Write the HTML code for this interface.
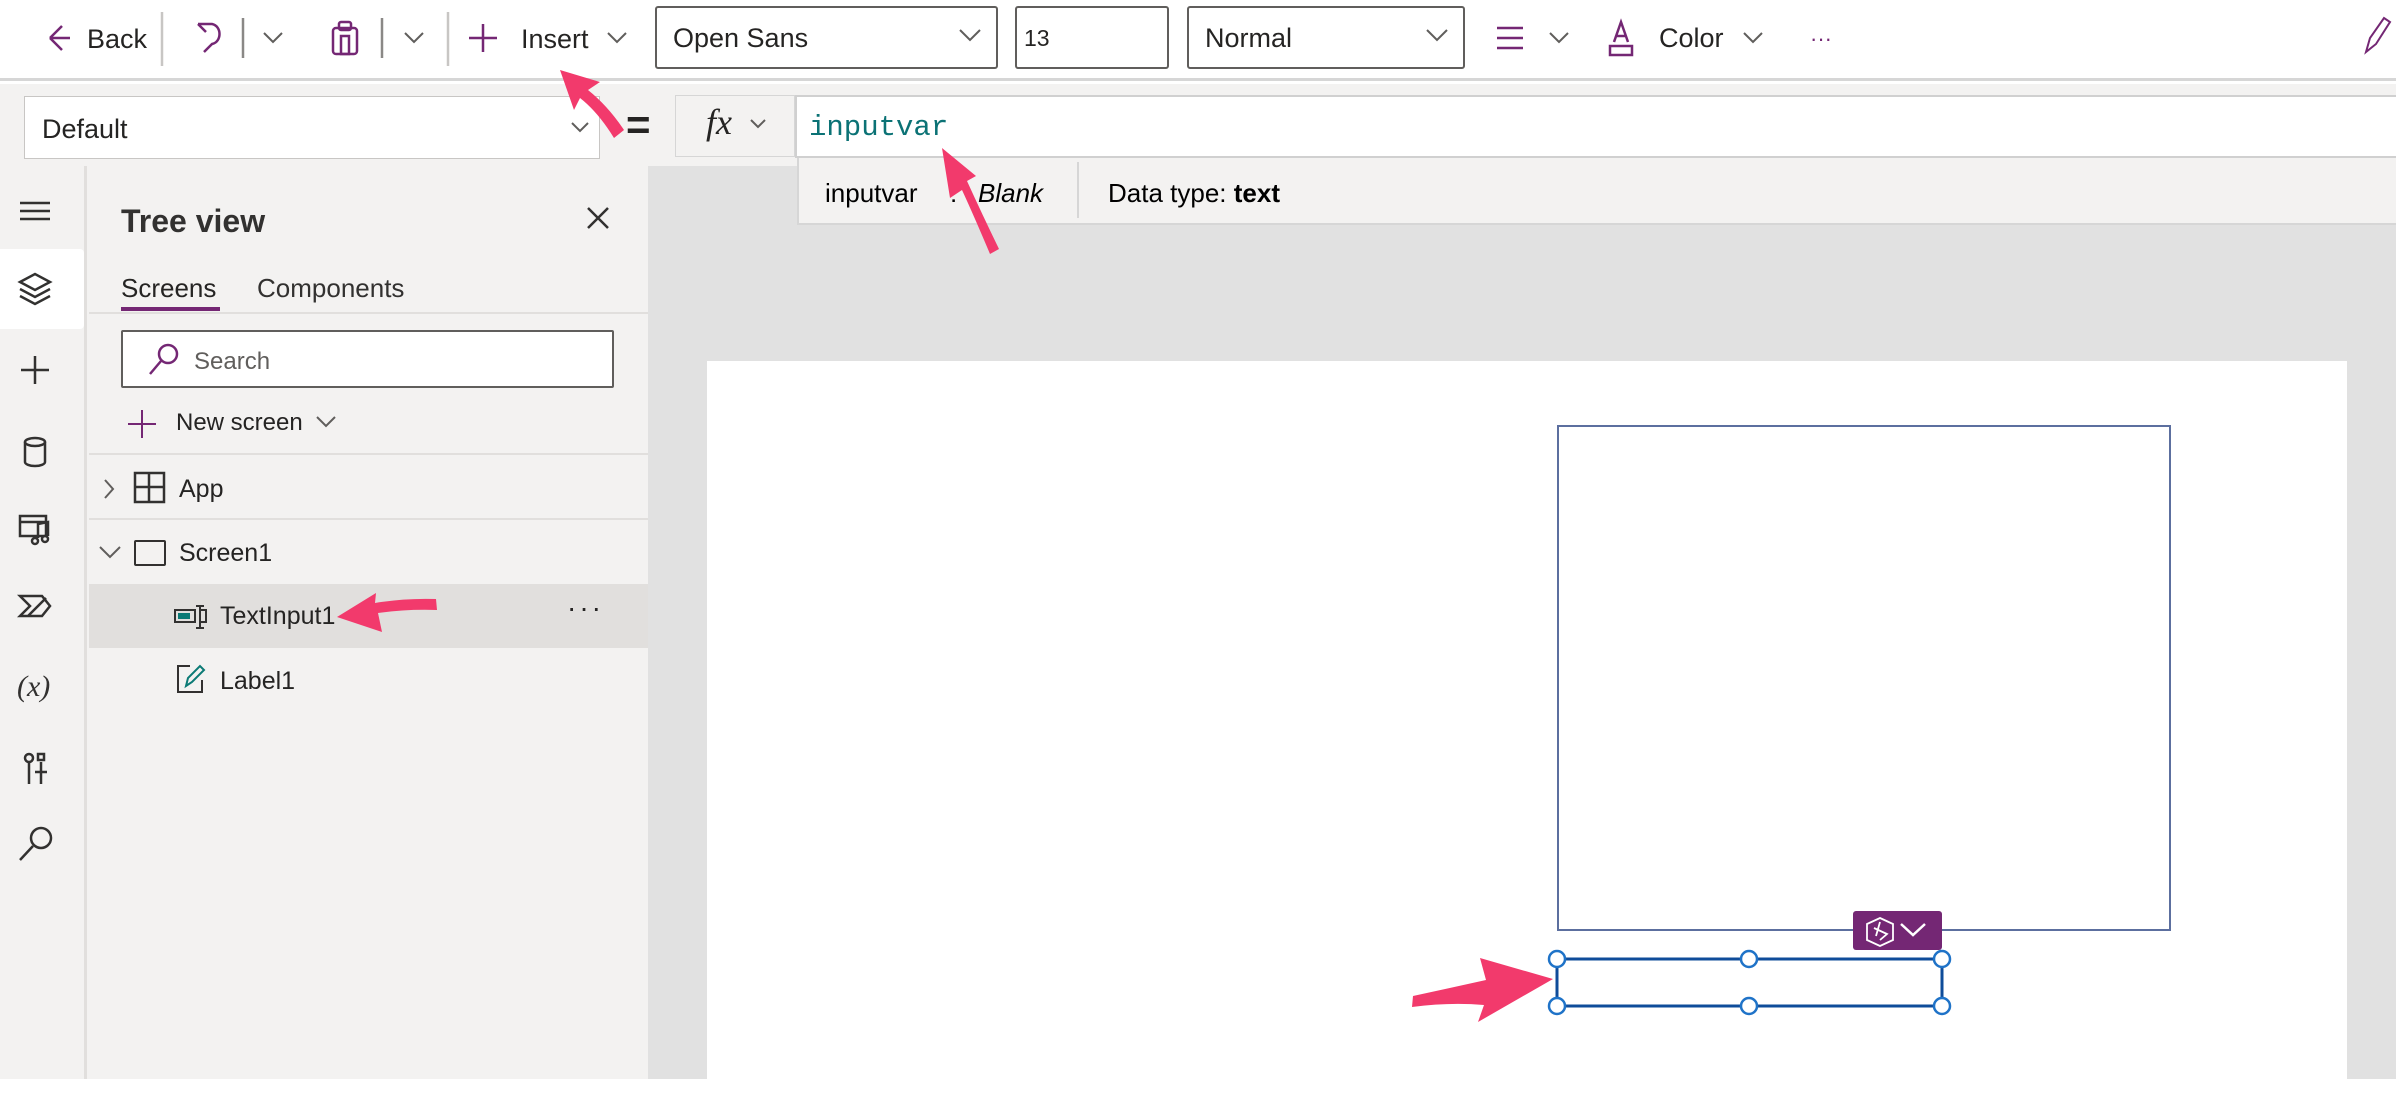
<!DOCTYPE html>
<html><head><meta charset="utf-8"><style>
*{margin:0;padding:0;box-sizing:border-box}
body{width:2396px;height:1120px;background:#fff;font-family:"Liberation Sans",sans-serif;position:relative;overflow:hidden;color:#252423}
.a{position:absolute}
.t{position:absolute;white-space:nowrap;line-height:1}
svg.i{position:absolute;overflow:visible}
</style></head><body>
<!-- toolbar -->
<div class="a" style="left:0;top:0;width:2396px;height:81px;background:#fff;border-bottom:3px solid #d6d6d6"></div>
<svg class="i" style="left:0;top:0" width="2396" height="82" fill="none" stroke-width="2.5">
 <path d="M50 38 H70 M50 38 L62 26 M50 38 L62 50" stroke="#742774"/>
 <line x1="162" y1="12" x2="162" y2="66" stroke="#c8c6c4"/>
 <path d="M198 24 L206 32 M198 24 L212 24 C222 26 222 42 212 44 L204 52" stroke="#742774"/>
 <line x1="243" y1="18" x2="243" y2="58" stroke="#8a8886"/>
 <path d="M264 33 L273 42 L282 33" stroke="#605e5c" stroke-width="2"/>
 <rect x="333" y="28" width="24" height="26" rx="3" stroke="#742774"/>
 <rect x="339" y="22" width="12" height="8" rx="2" stroke="#742774"/>
 <rect x="341" y="36" width="8" height="18" stroke="#742774"/>
 <line x1="382" y1="18" x2="382" y2="58" stroke="#8a8886"/>
 <path d="M405 33 L414 42 L423 33" stroke="#605e5c" stroke-width="2"/>
 <line x1="448" y1="12" x2="448" y2="66" stroke="#c8c6c4"/>
 <path d="M483 24 V52 M469 38 H497" stroke="#742774"/>
 <path d="M608 33 L617 42 L626 33" stroke="#605e5c" stroke-width="2"/>
 <path d="M1497 28 H1523 M1497 38 H1523 M1497 48 H1523" stroke="#742774"/>
 <path d="M1550 33 L1559 42 L1568 33" stroke="#605e5c" stroke-width="2"/>
 <path d="M1614 42 L1621 22 L1628 42 M1616 36 H1626" stroke="#742774"/>
 <rect x="1610" y="46" width="22" height="9" stroke="#742774"/>
 <path d="M1744 33 L1753 42 L1762 33" stroke="#605e5c" stroke-width="2"/>
 <path d="M2366 52 L2370 38 L2384 18 L2390 22 L2376 44 Z" stroke="#742774" stroke-width="2"/>
</svg>
<div class="t" style="left:87px;top:26px;font-size:27px">Back</div>
<div class="t" style="left:521px;top:26px;font-size:27px">Insert</div>
<div class="a" style="left:655px;top:6px;width:343px;height:63px;border:2px solid #605e5c;border-radius:3px"></div>
<div class="t" style="left:673px;top:25px;font-size:27px">Open Sans</div>
<svg class="i" style="left:958px;top:28px" width="24" height="14"><path d="M2 2 L12 12 L22 2" stroke="#605e5c" stroke-width="2" fill="none"/></svg>
<div class="a" style="left:1015px;top:6px;width:154px;height:63px;border:2px solid #605e5c;border-radius:3px"></div>
<div class="t" style="left:1024px;top:27px;font-size:23px">13</div>
<div class="a" style="left:1187px;top:6px;width:278px;height:63px;border:2px solid #605e5c;border-radius:3px"></div>
<div class="t" style="left:1205px;top:25px;font-size:27px">Normal</div>
<svg class="i" style="left:1425px;top:28px" width="24" height="14"><path d="M2 2 L12 12 L22 2" stroke="#605e5c" stroke-width="2" fill="none"/></svg>
<div class="t" style="left:1659px;top:25px;font-size:27px">Color</div>
<div class="t" style="left:1810px;top:28px;font-size:22px;color:#742774">···</div>

<!-- formula row -->
<div class="a" style="left:0;top:84px;width:2396px;height:82px;background:#f3f2f1"></div>
<div class="a" style="left:24px;top:96px;width:576px;height:63px;background:#fff;border:1px solid #c8c6c4"></div>
<div class="t" style="left:42px;top:116px;font-size:27px">Default</div>
<svg class="i" style="left:570px;top:121px" width="20" height="12"><path d="M2 2 L10 10 L18 2" stroke="#605e5c" stroke-width="2" fill="none"/></svg>
<div class="t" style="left:626px;top:104px;font-size:42px;font-weight:bold">=</div>
<div class="a" style="left:675px;top:95px;width:120px;height:62px;border:1px solid #d6d6d6;background:#f3f2f1"></div>
<div class="t" style="left:706px;top:104px;font-size:36px;font-family:'Liberation Serif',serif;font-style:italic">fx</div>
<svg class="i" style="left:749px;top:118px" width="20" height="12"><path d="M2 2 L9 9 L16 2" stroke="#605e5c" stroke-width="2" fill="none"/></svg>
<div class="a" style="left:795px;top:95px;width:1601px;height:63px;background:#fff;border:2px solid #d0d0d0;border-right:none"></div>
<div class="t" style="left:809px;top:113px;font-size:29px;font-family:'Liberation Mono',monospace;color:#0b7275">inputvar</div>
<!-- tooltip -->
<div class="a" style="left:797px;top:158px;width:1599px;height:67px;background:#f3f2f1;border:2px solid #d6d6d6;border-top:none;border-right:none"></div>
<div class="t" style="left:825px;top:180px;font-size:26px;color:#000">inputvar</div>
<div class="t" style="left:950px;top:180px;font-size:26px;color:#000">:</div>
<div class="t" style="left:978px;top:180px;font-size:26px;font-style:italic;color:#000">Blank</div>
<div class="a" style="left:1077px;top:162px;width:2px;height:56px;background:#d6d6d6"></div>
<div class="t" style="left:1108px;top:180px;font-size:26px;color:#000">Data type: <b>text</b></div>

<!-- canvas area -->
<div class="a" style="left:648px;top:225px;width:1748px;height:854px;background:#e1e1e1"></div>
<div class="a" style="left:648px;top:166px;width:149px;height:59px;background:#e1e1e1"></div>
<div class="a" style="left:707px;top:361px;width:1640px;height:718px;background:#fff"></div>
<div class="a" style="left:1557px;top:425px;width:614px;height:506px;border:2px solid #5c6f9f"></div>

<!-- left rail -->
<div class="a" style="left:0;top:166px;width:87px;height:913px;background:#f3f2f1;border-right:3px solid #e1dfdd"></div>
<div class="a" style="left:0;top:249px;width:84px;height:80px;background:#fff;border-radius:0 4px 4px 0"></div>
<svg class="i" style="left:0;top:166px" width="87" height="913" fill="none" stroke="#323130" stroke-width="2.5">
 <path d="M20 37 H50 M20 45 H50 M20 53 H50"/>
 <path d="M20 116 L35 108 L50 116 L35 124 Z M20 123 L35 131 L50 123 M20 130 L35 138 L50 130"/>
 <path d="M35 190 V218 M21 204 H49"/>
 <ellipse cx="35" cy="276" rx="10" ry="4"/><path d="M25 276 V296 A10 4 0 0 0 45 296 V276"/>
 <rect x="20" y="350" width="26" height="20"/><path d="M20 356 H46 M38 372 V358 L48 356 V370"/><circle cx="35" cy="375" r="3"/><circle cx="45" cy="373" r="3"/>
 <path d="M20 430 L42 430 L50 440 L42 450 L20 450 L30 440 Z M28 450 L46 432"/>
 <text x="17" y="530" font-size="30" font-family="Liberation Serif" font-style="italic" fill="#323130" stroke="none">(x)</text>
 <path d="M29 596 V618 M41 596 V618 M41 606 H47 M35 606 H41"/><circle cx="29" cy="592" r="4"/><rect x="38" y="588" width="6" height="6"/>
 <circle cx="41" cy="672" r="10"/><path d="M33 680 L20 694"/>
</svg>

<!-- tree panel -->
<div class="a" style="left:87px;top:166px;width:561px;height:913px;background:#f3f2f1"></div>
<div class="t" style="left:121px;top:205px;font-size:32px;font-weight:bold;color:#323130">Tree view</div>
<svg class="i" style="left:586px;top:206px" width="24" height="24"><path d="M2 2 L22 22 M22 2 L2 22" stroke="#323130" stroke-width="2.5"/></svg>
<div class="t" style="left:121px;top:275px;font-size:26px;color:#252423">Screens</div>
<div class="a" style="left:121px;top:307px;width:99px;height:4px;background:#742774"></div>
<div class="t" style="left:257px;top:275px;font-size:26px;color:#323130">Components</div>
<div class="a" style="left:89px;top:312px;width:559px;height:2px;background:#e1dfdd"></div>
<div class="a" style="left:121px;top:330px;width:493px;height:58px;background:#fff;border:2px solid #605e5c;border-radius:2px"></div>
<svg class="i" style="left:146px;top:340px" width="40" height="40" fill="none" stroke="#742774" stroke-width="2.5"><circle cx="22" cy="14" r="9"/><path d="M15 21 L4 34"/></svg>
<div class="t" style="left:194px;top:350px;font-size:24px;color:#605e5c">Search</div>
<svg class="i" style="left:126px;top:408px" width="32" height="32"><path d="M16 2 V30 M2 16 H30" stroke="#742774" stroke-width="2"/></svg>
<div class="t" style="left:176px;top:411px;font-size:24px">New screen</div>
<svg class="i" style="left:315px;top:415px" width="22" height="14"><path d="M2 2 L11 11 L20 2" stroke="#605e5c" stroke-width="2" fill="none"/></svg>
<div class="a" style="left:89px;top:453px;width:559px;height:2px;background:#e1dfdd"></div>
<svg class="i" style="left:102px;top:478px" width="14" height="22"><path d="M3 2 L11 11 L3 20" stroke="#605e5c" stroke-width="2" fill="none"/></svg>
<svg class="i" style="left:134px;top:472px" width="32" height="32" fill="none" stroke="#323130" stroke-width="2.5"><rect x="1" y="1" width="29" height="29"/><path d="M15 1 V30 M1 15 H30"/></svg>
<div class="t" style="left:179px;top:477px;font-size:25px">App</div>
<div class="a" style="left:89px;top:518px;width:559px;height:2px;background:#e1dfdd"></div>
<svg class="i" style="left:98px;top:545px" width="24" height="14"><path d="M2 2 L12 12 L22 2" stroke="#605e5c" stroke-width="2" fill="none"/></svg>
<div class="a" style="left:134px;top:540px;width:32px;height:26px;border:2.5px solid #323130;border-radius:2px"></div>
<div class="t" style="left:179px;top:541px;font-size:25px">Screen1</div>
<div class="a" style="left:89px;top:584px;width:559px;height:64px;background:#e1dfdd"></div>
<svg class="i" style="left:174px;top:604px" width="34" height="26" fill="none" stroke="#323130" stroke-width="2"><rect x="1" y="6" width="20" height="12"/><rect x="4" y="9" width="12" height="6" fill="#0b7a75" stroke="none"/><path d="M22 2 H30 M26 2 V24 M22 24 H30 M26 6 H32 V18 H26"/></svg>
<div class="t" style="left:220px;top:604px;font-size:25px">TextInput1</div>
<div class="t" style="left:567px;top:594px;font-size:28px;letter-spacing:3px">···</div>
<svg class="i" style="left:176px;top:664px" width="30" height="30" fill="none" stroke-width="2"><path d="M14 2 H2 V28 H26 V16" stroke="#323130"/><path d="M10 22 L12 14 L24 2 L28 6 L16 18 Z" stroke="#0b7a75"/></svg>
<div class="t" style="left:220px;top:669px;font-size:25px">Label1</div>

<!-- selected text input -->
<svg class="i" style="left:0;top:0" width="2396" height="1120">
 <rect x="1557" y="959" width="385" height="47" fill="none" stroke="#0f4c9a" stroke-width="3"/>
 <g fill="#fff" stroke="#1f73c8" stroke-width="2.5">
  <circle cx="1557" cy="959" r="8"/><circle cx="1749" cy="959" r="8"/><circle cx="1942" cy="959" r="8"/>
  <circle cx="1557" cy="1006" r="8"/><circle cx="1749" cy="1006" r="8"/><circle cx="1942" cy="1006" r="8"/>
 </g>
 <rect x="1853" y="911" width="89" height="39" rx="3" fill="#742774"/>
 <path d="M1880 918 L1893 924 L1893 940 L1880 946 L1867 940 L1867 924 Z M1874 928 L1887 934 L1880 940 M1880 922 L1876 936" fill="none" stroke="#fff" stroke-width="1.8"/>
 <path d="M1901 924 L1913 935 L1925 924" fill="none" stroke="#fff" stroke-width="2.5"/>
 <!-- arrows -->
 <g fill="#f23a6c">
  <path d="M624 130 L614 138 Q598 112 580 98 L574 110 L560 70 L600 82 L588 90 Q608 106 624 130 Z"/>
  <path d="M999 249 L990 254 Q974 216 962 190 L950 198 L942 148 L976 176 L967 181 Q982 214 999 249 Z"/>
  <path d="M436 599 L437 610 Q406 609 378 613 L382 632 L337 617 L376 593 L375 603 Q405 598 436 599 Z"/>
  <path d="M1413 996 L1412 1007 Q1450 1002 1484 1005 L1478 1022 L1553 979 L1480 958 L1486 980 Q1450 988 1413 996 Z"/>
 </g>
</svg>
</body></html>
